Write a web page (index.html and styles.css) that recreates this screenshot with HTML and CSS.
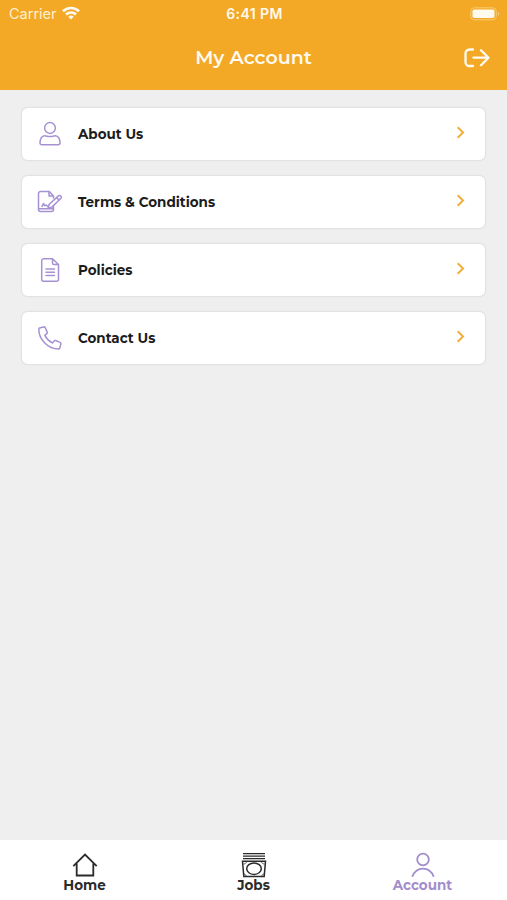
FILE: index.html
```html
<!DOCTYPE html>
<html lang="en">
<head>
<meta charset="utf-8">
<title>My Account</title>
<link rel="stylesheet" href="styles.css">
</head>
<body>
<div class="screen">
  <header class="header">
    <div class="status">
      <div class="carrier"><span>Carrier</span>
        <svg class="wifi" width="18" height="14" viewBox="0 0 18 14" fill="none" stroke="currentColor" stroke-width="2.6"><path d="M1 5.300C5.500.9 12.500.9 17 5.300"/><path d="M4 8.500c2.800-2.700 7.200-2.700 10 0"/><path d="M6.300 10.800a3.900 3.900 0 0 1 5.400 0L9 13.500z" fill="currentColor" stroke="none"/></svg>
      </div>
      <div class="time">6:41 PM</div>
      <svg class="battery" width="30" height="14" viewBox="0 0 30 14"><rect x=".8" y=".8" width="25.500" height="12" rx="3.500" fill="none" stroke="currentColor" stroke-opacity=".4"/><rect x="2.500" y="2.500" width="22" height="8.600" rx="1.800" fill="currentColor"/><path d="M28 5c1.600.7 1.600 3 0 3.700z" fill="currentColor" opacity=".45"/></svg>
    </div>
    <div class="titlebar">
      <h1>My Account</h1>
      <svg class="logout" width="26" height="20" viewBox="0 0 26 20" fill="none" stroke="currentColor" stroke-width="2.300" stroke-linecap="round" stroke-linejoin="round"><path d="M9 1.500H5.500a4 4 0 0 0-4 4v8.500a4 4 0 0 0 4 4H9M9.500 9.700H24.500M17 2.200l7.500 7.500-7.500 7.500"/></svg>
    </div>
  </header>
  <main class="list">
    <a class="card">
      <svg class="icon" width="26" height="26" viewBox="0 0 26 26"><circle cx="13" cy="7" r="5.400"/><path d="M7.500 14.800c2 0 3.200.8 5.500.8s3.500-.8 5.500-.8c2.800 0 4.500 3.500 4.500 7 0 1.300-.7 2-2 2H5c-1.300 0-2-.7-2-2 0-3.500 1.700-7 4.500-7z"/></svg>
      <span class="label">About Us</span>
      <svg class="chevron" width="9" height="13" viewBox="0 0 9 13"><path d="M1.700 1.300 7 6.500l-5.300 5.200"/></svg>
    </a>
    <a class="card">
      <svg class="icon" width="26" height="26" viewBox="0 0 26 26"><path d="M16.500 9V7L12.300 2.500H3.500a2 2 0 0 0-2 2v16a2 2 0 0 0 2 2H14.500a2 2 0 0 0 2-2V17M12 2.800V7h4.300M1.800 19.700h14.500M5 17.500c1-3 2-3.700 2-2s1.200 1.200 2 .5l2 1.300M12 15.500l9.400-8.600c1.500-1.300 4 .8 2.500 2.400l-9 8.800-3.900 1.200zM19.500 8.500l2.800 2.700"/></svg>
      <span class="label">Terms &amp; Conditions</span>
      <svg class="chevron" width="9" height="13" viewBox="0 0 9 13"><path d="M1.700 1.300 7 6.500l-5.300 5.200"/></svg>
    </a>
    <a class="card">
      <svg class="icon" width="26" height="26" viewBox="0 0 26 26"><path d="M15.500 1.700H6.700a2 2 0 0 0-2 2v18.500a2 2 0 0 0 2 2h12.800a2 2 0 0 0 2-2V7.500zM15.500 1.700V6a1.500 1.500 0 0 0 1.500 1.500h4.500M9 12h8.500M9 15.300h8.500M9 18.600h8.500"/></svg>
      <span class="label">Policies</span>
      <svg class="chevron" width="9" height="13" viewBox="0 0 9 13"><path d="M1.700 1.300 7 6.500l-5.300 5.200"/></svg>
    </a>
    <a class="card">
      <svg class="icon" width="26" height="26" viewBox="0 0 26 26"><path d="M2.500 3 6.700 1.900c.8-.2 1.300.1 1.600.8l1.900 4.400c.3.700.1 1.200-.4 1.600L7.800 10.300c1.700 3.300 4.300 5.900 7.600 7.600l1.700-2c.4-.5.900-.6 1.500-.4l4.500 1.900c.7.300 1 .8.800 1.500L22.800 23c-.2.700-.7 1-1.300 1C11.100 24 1.800 14.500 1.800 4.200c0-.7.200-1.100.7-1.200z"/></svg>
      <span class="label">Contact Us</span>
      <svg class="chevron" width="9" height="13" viewBox="0 0 9 13"><path d="M1.700 1.300 7 6.500l-5.300 5.200"/></svg>
    </a>
  </main>
  <nav class="tabs">
    <a class="tab">
      <svg width="26" height="26" viewBox="0 0 26 26"><path d="M1.300 14.200 13 2.500l11.700 11.700M4.700 11.500v12h16.600v-12"/></svg>
      <span>Home</span>
    </a>
    <a class="tab">
      <svg width="26" height="26" viewBox="0 0 26 26"><path d="M2 1.600h22M2 4.200h22M2 6.700h22" stroke-width="1.300"/><path d="M1.500 9.300h23L23.200 24.500H2.800z" stroke-width="1.500"/><ellipse cx="13" cy="16.700" rx="7.300" ry="5.700" stroke-width="1.500"/><path d="M2.500 12c1.500 0 2.500-.7 3-2.200M23.500 12c-1.500 0-2.500-.7-3-2.200M3 22c1.200 0 2 .9 2.300 2.300M23 22c-1.200 0-2 .9-2.300 2.300" stroke-width=".8"/></svg>
      <span>Jobs</span>
    </a>
    <a class="tab active">
      <svg width="26" height="26" viewBox="0 0 26 26"><circle cx="13" cy="7.500" r="5.800"/><path d="M2.300 24.700C4.300 19.400 8 16.600 13 16.600s8.700 2.800 10.700 8.100"/></svg>
      <span>Account</span>
    </a>
  </nav>
</div>
</body>
</html>
```
FILE: styles.css
```css
* { box-sizing: border-box; }
body {
  margin: 0;
  font-family: Montserrat, Inter, "Open Sans", sans-serif;
  background: #efefef;
}
.screen {
  height: 900px;
  display: flex;
  flex-direction: column;
}
.header {
  height: 90px;
  background: #f3a925;
  color: #fffaf0;
}
.status {
  height: 27px;
  padding: 0 7px 0 9px;
  display: grid;
  grid-template-columns: 1fr auto 1fr;
  align-items: center;
  font-family: Inter, sans-serif;
  font-size: 14px;
  line-height: 20px;
}
.carrier {
  display: flex;
  align-items: center;
  gap: 5px;
  font-size: 14.5px;
  color: #fff0cf;
}
.wifi {
  margin-top: -2px;
  color: #fffaf0;
}
.time {
  font-weight: 600;
  letter-spacing: .4px;
}
.battery { justify-self: end; }
.titlebar {
  height: 61px;
  padding: 0 17px;
  display: grid;
  grid-template-columns: 26px 1fr 26px;
  align-items: center;
}
h1 {
  grid-column: 2;
  margin: 0;
  text-align: center;
  font-size: 19px;
  font-weight: 600;
}
.list {
  flex: 1;
  padding: 17px 21px;
  display: flex;
  flex-direction: column;
  gap: 14px;
}
.card {
  height: 54px;
  padding: 0 20px 1px 15px;
  display: flex;
  align-items: center;
  background: #fff;
  border: 1px solid #e2e2e2;
  border-radius: 7px;
  box-shadow: 0 0 2px rgba(0, 0, 0, .06);
}
.icon {
  fill: none;
  stroke: #a692d2;
  stroke-width: 1.5;
  stroke-linecap: round;
  stroke-linejoin: round;
}
.label {
  flex: 1;
  margin-left: 15px;
  font-size: 13.5px;
  font-weight: 700;
  color: #1c1c1c;
}
.chevron {
  margin-top: -2px;
  fill: none;
  stroke: #f0ae38;
  stroke-width: 2;
}
.tabs {
  height: 60px;
  background: #fff;
  display: grid;
  grid-template-columns: repeat(3, 1fr);
}
.tab {
  padding-top: 12px;
  display: flex;
  flex-direction: column;
  align-items: center;
  font-size: 13.5px;
  font-weight: 700;
  line-height: 15px;
  color: #2b2b2b;
}
.tab svg {
  fill: none;
  stroke: currentColor;
  stroke-width: 1.8;
}
.active { color: #a28dcc; }
```
